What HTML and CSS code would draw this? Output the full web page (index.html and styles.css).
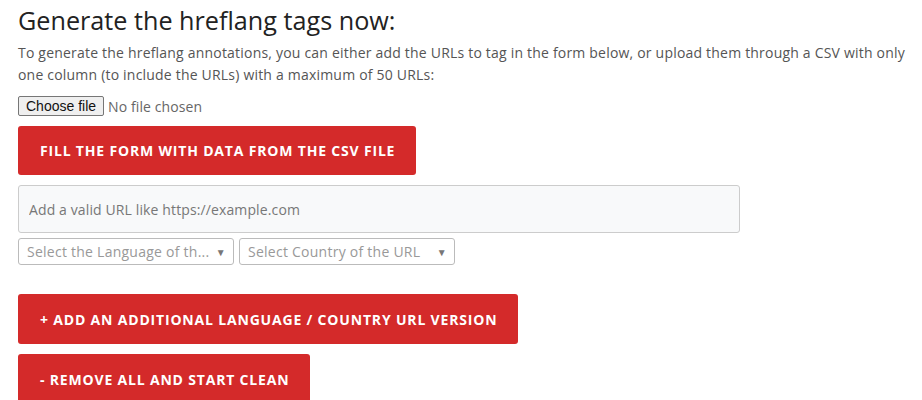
FILE: index.html
```html
<!DOCTYPE html>
<html>
<head>
<meta charset="utf-8">
<link rel="stylesheet" href="styles.css">
</head>
<body>
<div class="page">
  <h2 class="title">Generate the hreflang tags now:</h2>
  <p class="intro">To generate the hreflang annotations, you can either add the URLs to tag in the form below, or upload them through a CSV with only one column (to include the URLs) with a maximum of 50 URLs:</p>
  <label class="file-row">
    <input class="file-hidden" type="file">
    <span class="file-btn">Choose file</span>
    <span class="file-name">No file chosen</span>
  </label>
  <button class="btn btn-fill">FILL THE FORM WITH DATA FROM THE CSV FILE</button>
  <div class="url-group">
    <input class="url" type="text" placeholder="Add a valid URL like https://example.com">
    <div class="selects">
      <div class="select"><span class="sel-text">Select the Language of th...</span><span class="arrow">&#9660;</span></div>
      <div class="select"><span class="sel-text">Select Country of the URL</span><span class="arrow">&#9660;</span></div>
    </div>
  </div>
  <button class="btn btn-add">+ ADD AN ADDITIONAL LANGUAGE / COUNTRY URL VERSION</button>
  <button class="btn btn-remove">- REMOVE ALL AND START CLEAN</button>
</div>
</body>
</html>
```
FILE: styles.css
```css
html, body {
  margin: 0;
  padding: 0;
  background: #fff;
}
.page {
  padding: 0 4px 0 18px;
  font-family: "Open Sans", sans-serif;
  color: #555;
  display: flex;
  flex-direction: column;
  align-items: flex-start;
}
.title {
  font-family: "Open Sans", sans-serif;
  font-weight: 400;
  font-size: 25.2px;
  line-height: 32px;
  color: #222;
  margin: 4px 0 6px 0;
}
.intro {
  margin: 0 0 8px 0;
  font-size: 14px;
  letter-spacing: 0.2px;
  line-height: 22px;
  color: #555;
}
.file-row {
  height: 24px;
  display: flex;
  align-items: center;
  margin-bottom: 8px;
  gap: 4px;
}
.file-hidden {
  display: none;
}
.file-btn {
  font-family: "Liberation Sans", Arial, sans-serif;
  font-size: 14px;
  line-height: 18px;
  color: #111;
  background: #efefef;
  border: 1px solid #767676;
  border-radius: 2px;
  padding: 0 7px;
}
.file-name {
  font-size: 14px;
  letter-spacing: 0.1px;
  color: #666;
}
.btn {
  font-family: "Open Sans", sans-serif;
  font-weight: 700;
  font-size: 14px;
  letter-spacing: 0.82px;
  color: #fff;
  background: #d42a2a;
  border: none;
  border-radius: 3px;
  height: 49px;
  padding: 0 21px 0 22px;
  cursor: pointer;
}
.url-group {
  margin-top: 10px;
  display: flex;
  flex-direction: column;
  gap: 5px;
}
.url {
  width: 722px;
  height: 48px;
  box-sizing: border-box;
  background: #f8f9fa;
  border: 1px solid #ccc;
  border-radius: 3px;
  padding: 0 10px;
  font-family: "Open Sans", sans-serif;
  font-size: 14px;
  letter-spacing: 0.12px;
}
.url::placeholder {
  color: #777;
}
.selects {
  display: flex;
  gap: 5px;
}
.select {
  width: 216px;
  height: 27px;
  box-sizing: border-box;
  border: 1px solid #bbb;
  border-radius: 3px;
  display: flex;
  align-items: center;
  justify-content: space-between;
  padding: 0 7px 0 8px;
  font-size: 14px;
  letter-spacing: 0.25px;
  color: #999;
}
.arrow {
  font-size: 10px;
  color: #777;
}
.btn-add {
  margin-top: 29px;
  height: 50px;
}
.btn-remove {
  margin-top: 10px;
  height: 50px;
}
```
